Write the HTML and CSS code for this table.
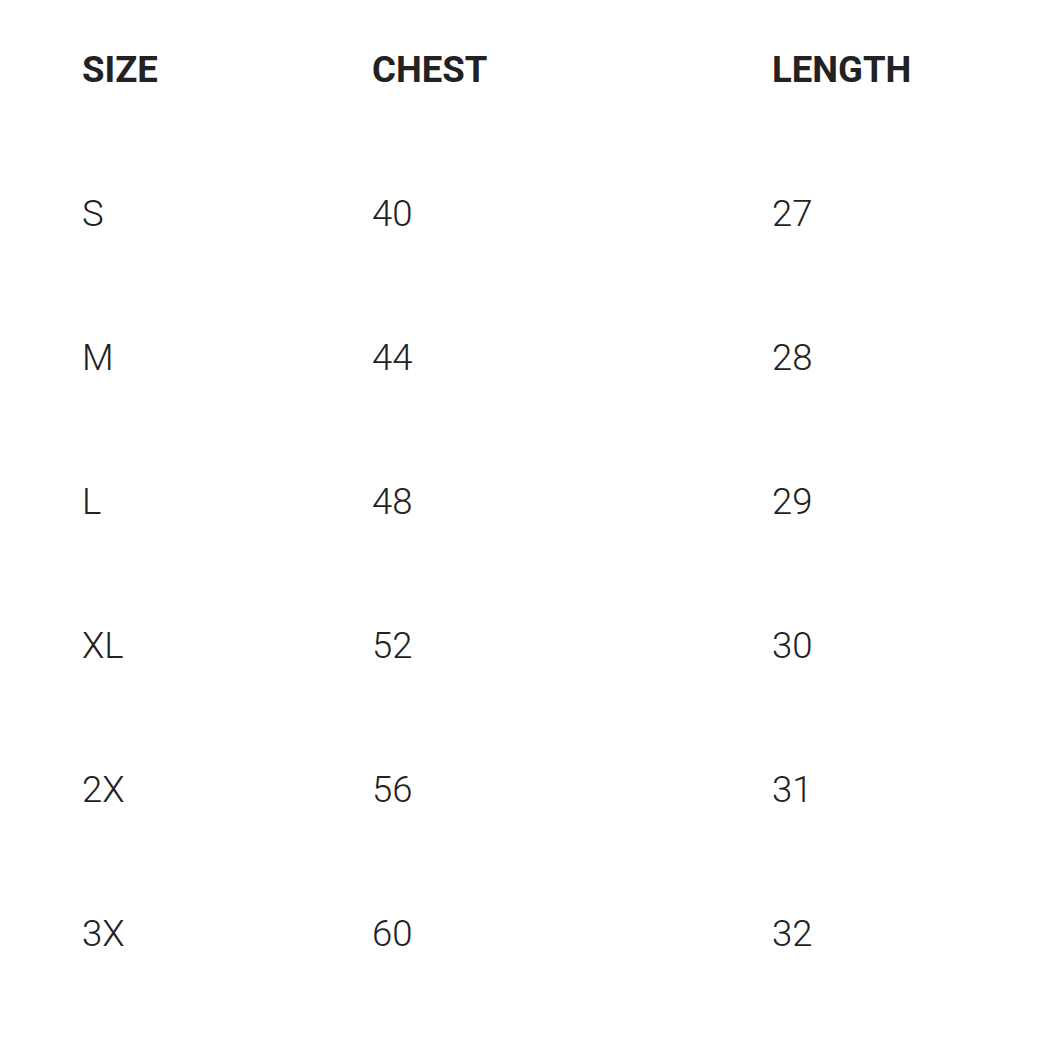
FILE: index.html
```html
<!DOCTYPE html>
<html>
<head>
<meta charset="utf-8">
<link rel="stylesheet" href="styles.css">
</head>
<body>
<div class="size-table">
  <div class="cell head">SIZE</div><div class="cell head">CHEST</div><div class="cell head">LENGTH</div>
  <div class="cell">S</div><div class="cell">40</div><div class="cell">27</div>
  <div class="cell">M</div><div class="cell">44</div><div class="cell">28</div>
  <div class="cell">L</div><div class="cell">48</div><div class="cell">29</div>
  <div class="cell">XL</div><div class="cell">52</div><div class="cell">30</div>
  <div class="cell">2X</div><div class="cell">56</div><div class="cell">31</div>
  <div class="cell">3X</div><div class="cell">60</div><div class="cell">32</div>
</div>
</body>
</html>
```
FILE: styles.css
```css
html, body {
  margin: 0;
  padding: 0;
  background: #ffffff;
}
body {
  font-family: Roboto, "Liberation Sans", sans-serif;
  color: #222222;
}
.size-table {
  display: grid;
  grid-template-columns: 290px 400px 1fr;
  row-gap: 108px;
  padding: 52px 0 0 82px;
}
.cell {
  font-size: 36.5px;
  line-height: 36px;
  height: 36px;
  font-weight: 300;
}
.cell.head {
  font-weight: 700;
}
```
